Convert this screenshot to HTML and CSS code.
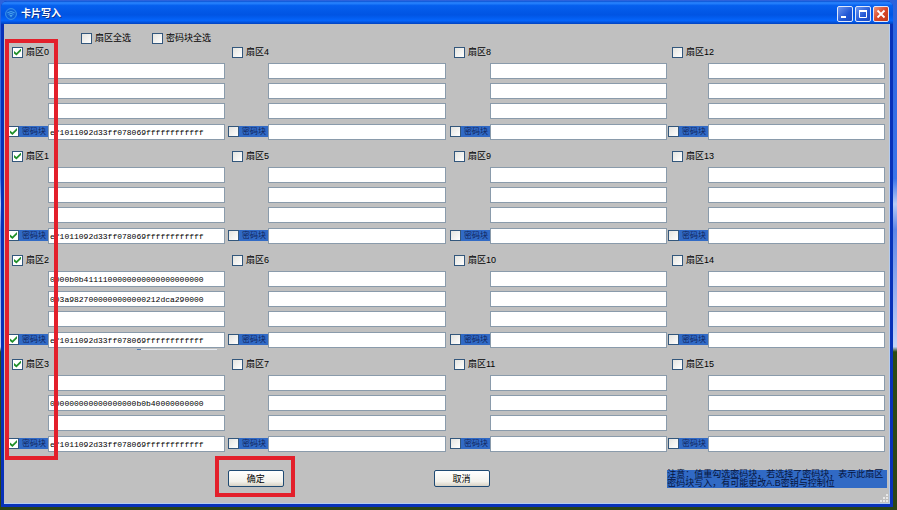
FILE: index.html
```html
<!DOCTYPE html>
<html lang="zh-CN">
<head>
<meta charset="utf-8">
<title>卡片写入</title>
<link rel="stylesheet" href="styles.css">
</head>
<body>
<main class="window">
  <header class="titlebar">
    <svg class="app-icon" viewBox="0 0 12 12" aria-hidden="true"><circle cx="6" cy="6" r="5.4" fill="#0d5fd8" stroke="#3c96ea"/><path d="M2.300 4.800Q6 2.200 9.700 4.800M3.500 6.300Q6 4.600 8.500 6.300" fill="none" stroke="#4aa6ee"/><path d="M4.400 7h3.200L6 9.400z" fill="#4aa6ee"/></svg>
    <h1>卡片写入</h1>
    <button class="caption" aria-label="最小化"><svg viewBox="0 0 14 14"><path d="M3 10h5" stroke="#fff" stroke-width="2"/></svg></button>
    <button class="caption" aria-label="最大化"><svg viewBox="0 0 14 14"><path d="M3 4h8" stroke="#fff" stroke-width="2"/><path d="M3.500 4v6.500h7V4" fill="none" stroke="#fff"/></svg></button>
    <button class="caption close" aria-label="关闭"><svg viewBox="0 0 14 14"><path d="M3.500 3.500l7 7M10.500 3.500l-7 7" stroke="#fff" stroke-width="1.800"/></svg></button>
  </header>
  <form class="content">
    <div class="select-all">
      <label><input type="checkbox">扇区全选</label>
      <label><input type="checkbox">密码块全选</label>
    </div>
    <div class="sectors" id="sectors"></div>
    <footer class="actions">
      <button type="button" class="push">确定</button>
      <button type="button" class="push">取消</button>
      <p class="note">注意：值重勾选密码块，若选择了密码块，表示此扇区密码块写入，有可能更改A.B密钥与控制位</p>
    </footer>
    <svg class="grip" viewBox="0 0 8 8" aria-hidden="true"><path d="M6 0h2v2H6zM3 3h2v2H3zM6 3h2v2H6zM0 6h2v2H0zM3 6h2v2H3zM6 6h2v2H6z" fill="#e8e8e8"/></svg>
  </form>
</main>
<div class="mark mark-sectors"></div>
<div class="mark mark-confirm"></div>
<script src="app.js"></script>
</body>
</html>
```
FILE: app.js
```js
const key = "ef1011092d33ff078069ffffffffffff";
const data = {
  0: ["", "", "", key],
  1: ["", "", "", key],
  2: ["0000b0b4111100000000000000000000", "003a9827000000000000212dca290000", "", key],
  3: ["", "000000000000000000b0b40000000000", "", key]
};
const root = document.getElementById("sectors");
for (let col = 0; col < 4; col++) {
  const column = document.createElement("div");
  column.className = "column";
  for (let row = 0; row < 4; row++) {
    const n = col * 4 + row;
    const values = data[n] || ["", "", "", ""];
    const checked = data[n] ? "checked" : "";
    const fields = values.map((v, i) =>
      `<input type="text" class="block" aria-label="扇区${n} 块${i}" value="${v}">`).join("");
    column.insertAdjacentHTML("beforeend", `
      <section class="sector${n === 2 ? " active" : ""}">
        <label class="sector-name"><input type="checkbox" ${checked}>扇区${n}</label>
        <label class="key-name"><input type="checkbox" ${checked}><span>密码块</span></label>
        <div class="blocks">${fields}</div>
      </section>`);
  }
  root.append(column);
}
```
FILE: styles.css
```css
* { box-sizing: border-box; }

body {
  margin: 0;
  min-height: 100vh;
  padding: 1px 4px 3px 1px;
  background: linear-gradient(#2c62dc 0, #3b74ea 35%, #b9cdf8 40%, #5e86e8 45%, #c5d5f8 68%, #2c4a14 69%, #2c4416 100%);
  font: 9px/12px "Liberation Sans", "Noto Sans CJK SC", sans-serif;
  color: #000;
}

.window {
  min-height: calc(100vh - 4px);
  display: flex;
  flex-direction: column;
  padding: 0 3px 3px;
  border-radius: 6px 6px 0 0;
  background: #0831b8;
}

.titlebar {
  display: flex;
  align-items: center;
  gap: 2px;
  height: 23px;
  margin: 0 -3px;
  padding: 2px 4px 0;
  border-radius: 6px 6px 0 0;
  background: linear-gradient(#0a4fd0 0, #2a86ff 8%, #0660ee 20%, #0054e3 60%, #0565fb 85%, #0142c0 100%);
}

.app-icon { width: 12px; height: 12px; }

h1 {
  flex: 1;
  margin: 0 0 0 2px;
  color: #fff;
  font-size: 10px;
  line-height: 14px;
  text-shadow: 1px 1px #0b2f8a;
}

.caption {
  width: 16px;
  height: 16px;
  padding: 0;
  border: 1px solid #dfe8fb;
  border-radius: 2px;
  background: linear-gradient(135deg, #6d96ef, #2257d5 60%, #1c4bc0);
}
.caption svg { display: block; width: 14px; height: 14px; }
.caption.close { background: linear-gradient(135deg, #ee9478, #d8482a 50%, #c03a18); }

.content {
  position: relative;
  flex: 1;
  padding: 8px 2px 0 3px;
  border: solid #b4ccf0;
  border-width: 0 1px 1px 0;
  background: #c0c0c0;
}

label { display: flex; align-items: center; gap: 3px; white-space: nowrap; }

.select-all { display: flex; gap: 21px; height: 12px; margin-left: 74px; }

input[type="checkbox"] {
  appearance: none;
  display: grid;
  place-items: center;
  flex: none;
  width: 11px;
  height: 11px;
  margin: 0;
  border: 1px solid #33577c;
  background: linear-gradient(135deg, #e4e4e0, #fff);
}
input[type="checkbox"]:checked { background: #fff; }
input[type="checkbox"]:checked::before {
  content: "";
  width: 7px;
  height: 7px;
  background: #21902a;
  clip-path: polygon(0 35%, 35% 65%, 100% 0, 100% 35%, 35% 100%, 0 70%);
}

.sectors {
  display: grid;
  grid-template-columns: 220fr 222fr 218fr 218fr;
  margin-right: 2px;
}
.column:nth-child(1) { padding-right: 2px; }
.column:nth-child(2) { padding-right: 3px; }

.sector {
  position: relative;
  display: grid;
  grid-template-columns: 41px 1fr;
  grid-template-rows: 16px 1fr;
  row-gap: 3px;
  padding-bottom: 8px;
}
.sector.active::after {
  content: "";
  position: absolute;
  right: 8px;
  bottom: 6px;
  width: 80px;
  height: 1px;
  background: linear-gradient(90deg, #4a7ab8 4px, #e6eaf0 4px);
}
.sector-name { grid-column: 1 / 3; padding-left: 5px; }
.key-name {
  align-self: end;
  gap: 0;
  height: 11px;
  margin: 0 0 3px 1px;
  background: #316ac5;
  color: #10245c;
  font-size: 8px;
  line-height: 11px;
}
.key-name span { padding-left: 3px; }

.blocks { display: grid; gap: 4px; }
.block {
  width: 100%;
  min-width: 0;
  height: 16px;
  margin: 0;
  padding: 0 1px;
  border: 1px solid #8a9bab;
  border-radius: 0;
  background: #fff;
  color: #000;
  font: 8px/14px "Liberation Mono", monospace;
}
.block:last-child { margin-top: 1px; }

.actions {
  display: grid;
  grid-template-columns: 221fr 206fr 234fr 220fr;
  align-items: start;
  padding-top: 10px;
}
.push {
  width: 56px;
  height: 17px;
  padding: 0;
  border: 1px solid #1f4a73;
  border-radius: 2px;
  background: linear-gradient(#fff, #f3f2ec 70%, #d8d2c4);
  color: #000;
  font: inherit;
}
.push:first-child { grid-column: 2; }
.note {
  margin: 0;
  background: #316ac5;
  color: #06143c;
  line-height: 9px;
}

.grip { position: absolute; right: 1px; bottom: 1px; width: 8px; height: 8px; }

.mark { position: absolute; border: 4px solid #e3202b; pointer-events: none; }
.mark-sectors { left: 5px; top: 39px; width: 53px; height: 421px; }
.mark-confirm { left: 215px; top: 456px; width: 80px; height: 41px; }
```
